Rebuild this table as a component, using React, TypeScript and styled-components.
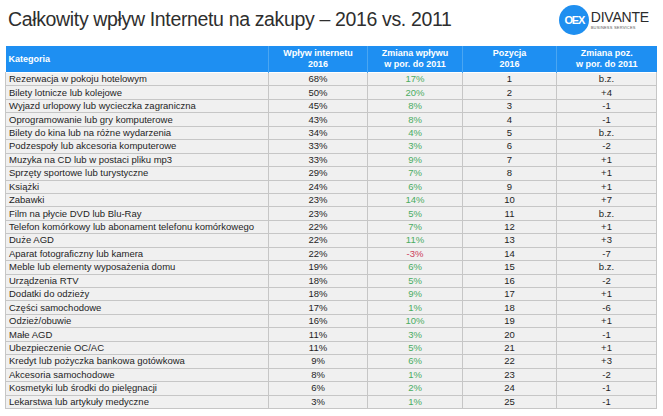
import * as React from 'react';
import styled, { createGlobalStyle } from 'styled-components';

type Row = {
  name: string;
  share: string;
  change: string;
  pos: number;
  posChange: string;
};

const rows: Row[] = [
  { name: 'Rezerwacja w pokoju hotelowym', share: '68%', change: '17%', pos: 1, posChange: 'b.z.' },
  { name: 'Bilety lotnicze lub kolejowe', share: '50%', change: '20%', pos: 2, posChange: '+4' },
  { name: 'Wyjazd urlopowy lub wycieczka zagraniczna', share: '45%', change: '8%', pos: 3, posChange: '-1' },
  { name: 'Oprogramowanie lub gry komputerowe', share: '43%', change: '8%', pos: 4, posChange: '-1' },
  { name: 'Bilety do kina lub na różne wydarzenia', share: '34%', change: '4%', pos: 5, posChange: 'b.z.' },
  { name: 'Podzespoły lub akcesoria komputerowe', share: '33%', change: '3%', pos: 6, posChange: '-2' },
  { name: 'Muzyka na CD lub w postaci pliku mp3', share: '33%', change: '9%', pos: 7, posChange: '+1' },
  { name: 'Sprzęty sportowe lub turystyczne', share: '29%', change: '7%', pos: 8, posChange: '+1' },
  { name: 'Książki', share: '24%', change: '6%', pos: 9, posChange: '+1' },
  { name: 'Zabawki', share: '23%', change: '14%', pos: 10, posChange: '+7' },
  { name: 'Film na płycie DVD lub Blu-Ray', share: '23%', change: '5%', pos: 11, posChange: 'b.z.' },
  { name: 'Telefon komórkowy lub abonament telefonu komórkowego', share: '22%', change: '7%', pos: 12, posChange: '+1' },
  { name: 'Duże AGD', share: '22%', change: '11%', pos: 13, posChange: '+3' },
  { name: 'Aparat fotograficzny lub kamera', share: '22%', change: '-3%', pos: 14, posChange: '-7' },
  { name: 'Meble lub elementy wyposażenia domu', share: '19%', change: '6%', pos: 15, posChange: 'b.z.' },
  { name: 'Urządzenia RTV', share: '18%', change: '5%', pos: 16, posChange: '-2' },
  { name: 'Dodatki do odzieży', share: '18%', change: '9%', pos: 17, posChange: '+1' },
  { name: 'Części samochodowe', share: '17%', change: '1%', pos: 18, posChange: '-6' },
  { name: 'Odzież/obuwie', share: '16%', change: '10%', pos: 19, posChange: '+1' },
  { name: 'Małe AGD', share: '11%', change: '3%', pos: 20, posChange: '-1' },
  { name: 'Ubezpieczenie OC/AC', share: '11%', change: '5%', pos: 21, posChange: '+1' },
  { name: 'Kredyt lub pożyczka bankowa gotówkowa', share: '9%', change: '6%', pos: 22, posChange: '+3' },
  { name: 'Akcesoria samochodowe', share: '8%', change: '1%', pos: 23, posChange: '-2' },
  { name: 'Kosmetyki lub środki do pielęgnacji', share: '6%', change: '2%', pos: 24, posChange: '-1' },
  { name: 'Lekarstwa lub artykuły medyczne', share: '3%', change: '1%', pos: 25, posChange: '-1' },
];

const GlobalStyle = createGlobalStyle`
  html, body {
    margin: 0;
    padding: 0;
    background: #ffffff;
    font-family: "Liberation Sans", Arial, sans-serif;
  }
`;

const Page = styled.div`
  width: 663px;
  height: 416px;
  overflow: hidden;
  padding: 7px 7px 0 5px;
  box-sizing: border-box;
`;

const TopBar = styled.div`
  display: flex;
  justify-content: space-between;
  align-items: flex-start;
  height: 39px;
`;

const Title = styled.h1`
  margin: 0 0 0 3px;
  font-size: 19.5px;
  line-height: 24px;
  font-weight: normal;
  color: #2e2e2e;
  letter-spacing: -0.35px;
`;

const Logo = styled.div`
  display: flex;
  align-items: center;
  gap: 2px;
  margin: -2px 7px 0 0;
`;

const LogoMark = styled.div`
  width: 30px;
  height: 30px;
  border-radius: 50%;
  background: #1f8ff0;
  color: #ffffff;
  font-weight: bold;
  font-size: 11px;
  letter-spacing: -1.2px;
  display: flex;
  align-items: center;
  justify-content: center;
  padding-left: 1px;
  box-sizing: border-box;
`;

const LogoText = styled.div`
  display: flex;
  flex-direction: column;
  line-height: 1;
`;

const Brand = styled.span`
  font-size: 14px;
  color: #2b2b2b;
  letter-spacing: -0.2px;
`;

const Tagline = styled.span`
  font-size: 4px;
  color: #555;
  margin-top: 2px;
  letter-spacing: 0.2px;
`;

const Table = styled.table`
  width: 651px;
  border-collapse: collapse;
  table-layout: fixed;
  font-size: 9.5px;
  color: #1e1e1e;
`;

const HeadCell = styled.th<{ $align?: 'left' | 'center' }>`
  background: #1e8ff2;
  color: #ffffff;
  font-weight: bold;
  font-size: 9px;
  line-height: 11px;
  height: 26px;
  padding: 0 3px;
  text-align: ${(p) => p.$align ?? 'center'};
  border-left: 1px solid #4aa6f2;
  &:first-child {
    border-left: none;
  }
`;

const BodyRow = styled.tr`
  height: 13.44px;
  background: #f0f0f0;
`;

const Cell = styled.td<{ $align?: 'left' | 'center'; $tone?: 'up' | 'down' }>`
  padding: 0 3px;
  line-height: 12px;
  white-space: nowrap;
  border: 1px solid #c6c6c6;
  border-top-color: #ffffff;
  text-align: ${(p) => p.$align ?? 'center'};
  color: ${(p) => (p.$tone === 'up' ? '#4aac62' : p.$tone === 'down' ? '#cc3d5c' : 'inherit')};
`;

export default function App() {
  return (
    <Page>
      <GlobalStyle />
      <TopBar>
        <Title>Całkowity wpływ Internetu na zakupy – 2016 vs. 2011</Title>
        <Logo>
          <LogoMark>OEX</LogoMark>
          <LogoText>
            <Brand>DIVANTE</Brand>
            <Tagline>BUSINESS SERVICES</Tagline>
          </LogoText>
        </Logo>
      </TopBar>
      <Table>
        <colgroup>
          <col style={{ width: 263 }} />
          <col style={{ width: 99 }} />
          <col style={{ width: 95 }} />
          <col style={{ width: 94 }} />
          <col style={{ width: 100 }} />
        </colgroup>
        <thead>
          <tr>
            <HeadCell $align="left">Kategoria</HeadCell>
            <HeadCell>Wpływ internetu<br />2016</HeadCell>
            <HeadCell>Zmiana wpływu<br />w por. do 2011</HeadCell>
            <HeadCell>Pozycja<br />2016</HeadCell>
            <HeadCell>Zmiana poz.<br />w por. do 2011</HeadCell>
          </tr>
        </thead>
        <tbody>
          {rows.map((r) => (
            <BodyRow key={r.pos}>
              <Cell $align="left">{r.name}</Cell>
              <Cell>{r.share}</Cell>
              <Cell $tone={r.change.startsWith('-') ? 'down' : 'up'}>{r.change}</Cell>
              <Cell>{r.pos}</Cell>
              <Cell>{r.posChange}</Cell>
            </BodyRow>
          ))}
        </tbody>
      </Table>
    </Page>
  );
}
